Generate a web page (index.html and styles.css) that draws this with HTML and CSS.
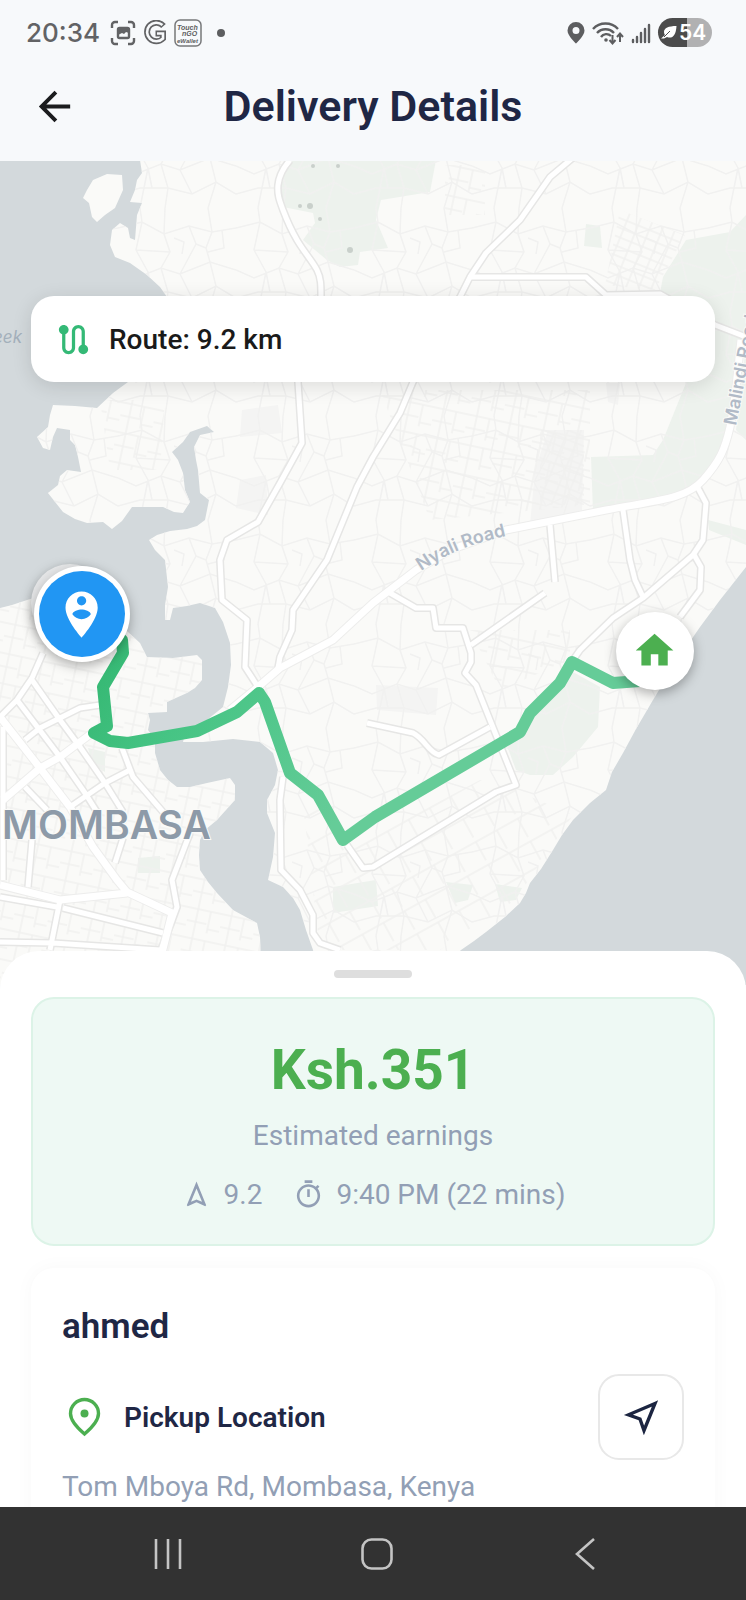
FILE: index.html
```html
<!DOCTYPE html>
<html lang="en">

<head>
    <meta charset="UTF-8">
    <meta name="viewport" content="width=device-width, initial-scale=1.0">
    <title>Delivery Details</title>
    <link rel="stylesheet" href="styles.css">
</head>

<body>
    <div class="status-bar">
        <div class="status-left">
            <span class="clock">20:34</span>
            <svg width="26" height="26" viewBox="0 0 26 26" fill="none" stroke="#626365" stroke-width="2.4">
                <path d="M2 8V5a3 3 0 0 1 3-3h3M18 2h3a3 3 0 0 1 3 3v3M24 18v3a3 3 0 0 1-3 3h-3M8 24H5a3 3 0 0 1-3-3v-3" />
                <rect x="8" y="8" width="11" height="10" rx="1.5" />
                <path d="M8 15V8h11v5l-3-1-2 2-2-1z" fill="#626365" stroke="none" />
            </svg>
            <svg width="24" height="26" viewBox="0 0 24 26" fill="none">
                <path d="M20.5 6A9.3 9.3 0 1 0 20 18.500V13.500H12.500" stroke="#626365" stroke-width="6" />
                <path d="M19.500 5A9.3 9.3 0 1 0 20 18.500V13.500H14" stroke="#f7f9fb" stroke-width="2.600" />
            </svg>
            <svg width="28" height="28" viewBox="0 0 28 28">
                <rect x="1" y="1" width="26" height="26" rx="5" fill="none" stroke="#77787a" stroke-width="1.5" />
                <g class="wallet-text">
                    <text x="3" y="11" class="wallet-big">Touch</text>
                    <text x="8" y="17" class="wallet-big">nGO</text>
                    <text x="3" y="24">eWallet</text>
                </g>
            </svg>
            <span class="status-dot"></span>
        </div>
        <div class="status-right">
            <svg width="18" height="22" viewBox="0 0 18 22">
                <path fill="#5d5e60" fill-rule="evenodd" d="M9 0a8.500 8.500 0 0 0-8.500 8.500C.5 14 9 21.500 9 21.500s8.500-7.500 8.500-13A8.500 8.500 0 0 0 9 0zm0 5a3.500 3.500 0 1 1 0 7 3.500 3.500 0 0 1 0-7z" />
            </svg>
            <svg width="32" height="26" viewBox="0 0 32 26" fill="none" stroke="#5d5e60" stroke-width="2.4">
                <path d="M1 9a17 17 0 0 1 25 0M5 13a11.500 11.500 0 0 1 17 0M9 17a6.500 6.500 0 0 1 10-1" />
                <circle cx="14" cy="20" r="1.800" fill="#5d5e60" stroke="none" />
                <path d="M20.500 15v8M17.500 20l3 3.500 3-3.500M28 22v-8M25 17l3-3.500 3 3.500" stroke-width="2" />
            </svg>
            <svg width="20" height="22" viewBox="0 0 20 22" stroke="#5d5e60" stroke-width="2.4" stroke-linecap="round">
                <path d="M2 18v2M6 15v5M10 11v9M14 7v13M18 3v17" />
            </svg>
            <div class="battery">
                <svg width="16" height="14" viewBox="0 0 16 14">
                    <path fill="#fff" d="M15.500 0c-8 0-12.500 2-12.500 6 0 2 1 3 1 3L0 12.500h3L6 11c5 2 9-1 9.500-11z" />
                    <path d="M3 11l6-6" stroke="#4c4c4c" />
                </svg>
                <span>54</span>
            </div>
        </div>
    </div>

    <header class="app-bar">
        <button class="back-button" aria-label="Back">
            <svg width="47" height="47" viewBox="0 0 24 24" fill="#1b1c1e">
                <path d="M20 11H7.83l5.59-5.59L12 4l-8 8 8 8 1.410-1.410L7.830 13H20v-2z" />
            </svg>
        </button>
        <h1>Delivery Details</h1>
    </header>

    <main class="map-area">
        <svg class="map" viewBox="0 161 746 824" preserveAspectRatio="xMidYMin slice">
            <defs>
                <path id="mainland" d="M140 160L142 173 137 180 135 190 130 202 142 203 137 215 135 240 130 238 128 228 120 223 112 230 110 245 115 257 130 263 147 275 160 287 167 297 165 340 128 382 113 393 97 408 75 406 53 405 50 415 48 427 37 437 43 448 50 450 53 437 57 428 70 430 70 440 75 445 78 457 81 472 67 470 60 476 58 485 48 493 63 512 75 519 87 523 103 522 112 529 122 521 132 507 163 507 174 512 183 513 190 502 185 490 183 473 178 460 172 452 183 442 190 432 207 426 214 432 200 435 194 447 196 460 198 470 200 493 209 500 207 510 205 520 197 526 187 529 170 531 157 535 149 540 155 550 165 560 168 587 165 605 165 620 170 620 173 608 187 606 200 603 215 608 223 622 230 643 231 665 228 687 223 707 207 720 185 733 183 742 203 742 233 739 260 742 273 753 278 770 275 785 267 800 267 813 275 833 273 857 268 880 283 887 293 898 300 910 306 930 313 950 320 990H420L461 950 474 941 486 932 505 917 520 903 526 893 530 883 541 869 553 850 562 835 573 820 590 803 606 790 612 772 623 753 636 729 653 700 676 662 700 627 720 600 746 567V160z" />
                <path id="old-town" d="M0 608L12 605 27 600 60 590 128 632 140 643 147 657 173 658 197 655 202 660 202 680 195 688 187 693 167 702 167 712 148 713 150 720 148 730 155 740 155 753 160 770 168 780 177 787 190 787 207 783 230 778 235 785 235 800 217 820 205 830 200 840 199 855 200 870 208 882 217 893 233 910 257 923 260 937 262 990H0z" />
                <path id="islet" d="M83 198L87 190 93 180 107 174 122 175 123 190 115 208 105 215 97 222 92 217 89 203z" />

                <!-- side streets, tiled over the land -->
                <pattern id="streets" width="118" height="104" patternUnits="userSpaceOnUse">
                    <path d="M0 20L24 14 46 26 71 18 94 24 118 20M0 62L18 70 43 60 62 66 92 54 118 62M24 14L18 42 30 64 22 104M22 0L24 14M46 26L52 44 43 60 50 84 47 104M47 0L46 26M71 18L78 36 62 66M94 24L88 40 92 54 98 78 90 104M90 0L94 24M0 90L22 84 50 84 74 90 98 78 118 90M18 42L52 44M78 36L88 40M62 66L74 90M30 64L34 84M104 22L106 40 90 44M56 30L66 34 64 46" />
                </pattern>
                <pattern id="blocks" width="34" height="30" patternUnits="userSpaceOnUse" patternTransform="rotate(12)">
                    <path d="M0 8H34M0 21H20M9 0V30M22 8V30M22 26H34" />
                </pattern>
                <pattern id="grid" width="24" height="26" patternUnits="userSpaceOnUse" patternTransform="rotate(-29)">
                    <path d="M0 5H24M8 5V26" />
                </pattern>
                <pattern id="estate" width="12" height="36" patternUnits="userSpaceOnUse" patternTransform="rotate(22)">
                    <path d="M0 6H12M0 15H12M0 24H12M0 33H12M4 0V36" />
                </pattern>

                <linearGradient id="route-fade" gradientUnits="userSpaceOnUse" x1="110" y1="640" x2="350" y2="800">
                    <stop offset="0" stop-color="#35b873" />
                    <stop offset="0.35" stop-color="#46c484" />
                    <stop offset="1" stop-color="#65cc98" />
                </linearGradient>

                <g id="major">
                    <path d="M290 160C283 168 279 175 278 185S280 202 283 210 290 228 297 240 313 262 317 270 321 285 321 297L298 382 302 443 280 483 258 522 227 540 220 560 222 600 247 620 245 667 258 687" />
                    <path d="M575 156L550 177 520 220 486 253 470 277 460 297 413 382 400 413 373 457 357 487 327 560 293 610 292 630 280 657 278 668" />
                    <path d="M470 277L516 277 586 277 606 295 660 294 715 325 746 337" />
                    <path d="M698 488L706 503 703 540 693 555 643 598 613 618 580 650 573 660" />
                    <path d="M693 553L701 567 700 590 680 617M550 525L555 582M623 510L630 560 635 580 643 597" />
                    <path d="M390 593L416 608 433 608 436 628 463 628 471 653 471 662 465 673 476 685 516 785 496 792 373 867 363 868 347 845M471 645L545 593" />
                    <path d="M367 723L413 733C425 739 428 752 439 755L490 727" />
                    <path d="M283 777L280 800 281 870 300 890 313 915 313 933 320 943 340 950" />
                </g>
                <g id="old-town-roads">
                    <path d="M0 717L17 700 32 678 43 653M17 700L60 757 85 793 97 812M32 680L60 720 80 747 105 783 123 812M25 787L47 810M25 740L40 728 80 708 100 705M70 807L105 783 130 770M122 748L133 777 163 812M123 838L115 863M3 727V880M32 840L28 887M63 908L163 933M60 900L50 950M0 942L53 943 160 950M190 833L172 880 177 907 160 953M0 897L57 907" />
                </g>
                <path id="avenue" d="M0 717L40 768 70 807 93 847 117 880 127 892 172 913 162 953M3 800L40 768 60 757 92 733M0 885L60 900 127 893" />
                <path id="highway" d="M741 340C737 375 735 405 730 427S720 461 703 480 660 500 606 510L506 530 450 550 416 570 373 603 333 640 280 668 258 687 230 710" />
                <path id="nyali-path" d="M421 571C446 554 470 543 520 533" />
            </defs>

            <rect y="160" width="746" height="825" fill="#d3d9dc" />
            <g class="land">
                <use href="#mainland" />
                <use href="#old-town" />
                <use href="#islet" />
            </g>

            <g class="parks">
                <path d="M290 160L280 185 283 207 313 213 315 223 303 240 327 260 340 267 358 265 360 252 388 248 376 220 381 200 430 192 436 160z" />
                <path d="M746 215L730 232 686 240 663 277 660 293 686 383 663 440 653 455 591 457 593 512 673 497 703 480 723 450 730 427 741 340 746 330z" />
                <path d="M746 345L736 430 746 440zM708 520L746 530V545L709 530zM586 224L600 226 602 248 584 246z" />
                <path d="M573 672L600 687 598 727 573 757 553 775 530 775 516 770 506 743 523 733 533 713z" />
                <path d="M333 887L376 880 378 906 333 913zM446 882L473 885 468 900 455 903zM495 884L522 888 516 900 500 902zM138 858L160 856 160 873 138 873zM88 748L105 752 105 772 92 764z" />
            </g>
            <g class="built-up">
                <path d="M242 410L278 405 282 433 240 437zM240 480L266 475 268 515 236 508zM376 685L438 688 436 715 377 710zM548 430L584 430 582 510 530 525 535 470zM606 383L620 383 618 405 608 402z" />
            </g>

            <use href="#mainland" fill="url(#streets)" />
            <path fill="url(#blocks)" d="M100 400L165 400 160 470 110 470zM445 165H485V215H445zM380 390L590 390 590 505 430 520zM470 630H570V660L500 690z" />
            <path fill="url(#estate)" d="M620 210L685 235 655 290 605 285zM540 430H584V505H540z" />
            <path fill="url(#grid)" d="M300 780L347 850 480 780 515 790 573 815 515 900 440 950H320z" />
            <use href="#old-town" fill="url(#blocks)" />

            <g class="road-casing">
                <use href="#major" />
                <use href="#old-town-roads" />
            </g>
            <use href="#avenue" class="road-casing wide" />
            <use href="#highway" class="road-casing wide" />
            <g class="road-fill">
                <use href="#major" />
                <use href="#old-town-roads" />
            </g>
            <use href="#avenue" class="road-fill wide" />
            <use href="#highway" class="road-fill wide" />

            <g fill="#c9d0cb">
                <circle cx="300" cy="206" r="2" />
                <circle cx="310" cy="206" r="3" />
                <circle cx="320" cy="219" r="2" />
                <circle cx="350" cy="250" r="3" />
                <circle cx="313" cy="166" r="2" />
                <circle cx="338" cy="166" r="2" />
            </g>

            <g class="map-label">
                <text x="2" y="839" class="city">MOMBASA</text>
                <text class="road-name"><textPath href="#nyali-path">Nyali Road</textPath></text>
                <text class="road-name" transform="translate(736 426) rotate(-79)">Malindi Road</text>
                <text x="22" y="343" class="creek" text-anchor="end">eek</text>
            </g>

            <path class="route-line" d="M122 640L123 653 103 687 107 726 94 733 110 741 128 743 197 731 237 712 259 693 265 702 290 773 318 795 343 840 375 817 520 732 530 713 560 683 572 662 613 683 640 681" />

            <g class="marker">
                <circle cx="70" cy="603" r="39" fill="#e6e7e8" />
            </g>
            <g class="marker">
                <circle cx="82" cy="614" r="48" fill="#fff" />
                <circle cx="82" cy="614" r="43" fill="#2196f3" />
            </g>
            <path transform="translate(54 587) scale(2.3)" fill="#fff" d="M12 2C8.140 2 5 5.140 5 9c0 5.250 7 13 7 13s7-7.750 7-13c0-3.860-3.140-7-7-7zm0 2c1.100 0 2 .9 2 2 0 1.110-.9 2-2 2s-2-.89-2-2c0-1.100.9-2 2-2zm0 10c-1.670 0-3.140-.85-4-2.150.02-1.320 2.670-2.050 4-2.050s3.980.73 4 2.050c-.86 1.300-2.330 2.150-4 2.150z" />
            <g class="marker">
                <circle cx="655" cy="651" r="39" fill="#fff" />
            </g>
            <path transform="translate(632 628) scale(1.88)" fill="#4caf50" d="M10 20v-6h4v6h5v-8h3L12 3 2 12h3v8z" />
        </svg>

        <div class="route-card">
            <svg width="39" height="39" viewBox="0 0 24 24" fill="#34b976">
                <path d="M19 15.180V7c0-2.210-1.790-4-4-4s-4 1.790-4 4v10c0 1.100-.9 2-2 2s-2-.9-2-2V8.820C8.160 8.400 9 7.300 9 6c0-1.660-1.340-3-3-3S3 4.340 3 6c0 1.300.84 2.400 2 2.820V17c0 2.210 1.790 4 4 4s4-1.790 4-4V7c0-1.100.9-2 2-2s2 .9 2 2v8.180c-1.160.41-2 1.510-2 2.820 0 1.660 1.340 3 3 3s3-1.340 3-3c0-1.300-.84-2.400-2-2.820z" />
            </svg>
            <span>Route: 9.2 km</span>
        </div>
    </main>

    <section class="sheet">
        <div class="sheet-handle"></div>

        <div class="earnings-card">
            <div class="amount">Ksh.351</div>
            <div class="caption">Estimated earnings</div>
            <div class="trip-info">
                <span class="trip-item">
                    <svg width="31" height="31" viewBox="0 0 24 24" fill="#929fb5">
                        <path d="M12 7.270l4.280 10.430-3.470-1.530-.81-.36-.81.36-3.470 1.530L12 7.270M12 2L4.500 20.290l.71.71L12 18l6.790 3 .71-.71L12 2z" />
                    </svg>
                    9.2
                </span>
                <span class="trip-item">
                    <svg width="31" height="31" viewBox="0 0 24 24" fill="#929fb5">
                        <path d="M15 1H9v2h6V1zm-4 13h2V8h-2v6zm8.030-6.610l1.420-1.420c-.43-.51-.9-.99-1.410-1.410l-1.420 1.420C16.070 4.740 14.120 4 12 4c-4.970 0-9 4.030-9 9s4.020 9 9 9 9-4.030 9-9c0-2.120-.74-4.070-1.970-5.610zM12 20c-3.870 0-7-3.130-7-7s3.130-7 7-7 7 3.130 7 7-3.130 7-7 7z" />
                    </svg>
                    9:40 PM (22 mins)
                </span>
            </div>
        </div>

        <div class="details-card">
            <h2>ahmed</h2>
            <div class="location-row">
                <svg width="45" height="40" viewBox="0 0 45 40">
                    <path d="M22.500 37C12.500 28.500 8.500 22.500 8.500 16.500a14 14 0 0 1 28 0C36.500 22.500 32.500 28.500 22.500 37z" fill="none" stroke="#4caf50" stroke-width="3.4" />
                    <circle cx="22.500" cy="16.500" r="4" fill="#4caf50" />
                </svg>
                <h3>Pickup Location</h3>
                <button class="navigate-button" aria-label="Navigate">
                    <svg width="36" height="36" viewBox="0 0 36 36" fill="none" stroke="#1c2541" stroke-width="3.4">
                        <path d="M32 4.500L5.500 15.800 17 20 21 31.500z" />
                    </svg>
                </button>
            </div>
            <p class="address">Tom Mboya Rd, Mombasa, Kenya</p>
        </div>
    </section>

    <nav class="nav-bar">
        <button aria-label="Recent apps">
            <svg width="36" height="36" viewBox="0 0 36 36" fill="none" stroke="#c4c4c4" stroke-width="2.6">
                <path d="M6 3v30M18 3v30M30 3v30" />
            </svg>
        </button>
        <button aria-label="Home">
            <svg width="36" height="36" viewBox="0 0 36 36" fill="none" stroke="#c4c4c4" stroke-width="2.6">
                <rect x="3.500" y="3.500" width="29" height="29" rx="9" />
            </svg>
        </button>
        <button aria-label="Back">
            <svg width="36" height="36" viewBox="0 0 36 36" fill="none" stroke="#c4c4c4" stroke-width="2.6">
                <path d="M27 3L10 18l17 15" />
            </svg>
        </button>
    </nav>
</body>

</html>
```

FILE: styles.css
```css
* {
    box-sizing: border-box;
}

body {
    font-family: Roboto, Arial, sans-serif;
    margin: 0;
    height: 100vh;
    display: flex;
    flex-direction: column;
    overflow: hidden;
    background-color: #f7f9fb;
    color: #1f2745;
}

h1,
h2,
h3,
p {
    margin: 0;
}

button {
    padding: 0;
    border: none;
    background: none;
}

svg {
    display: block;
    flex-shrink: 0;
}

/* Status bar */
.status-bar {
    flex-shrink: 0;
    height: 65px;
    padding: 0 34px 0 26px;
    display: flex;
    align-items: center;
    justify-content: space-between;
}

.status-left,
.status-right {
    display: flex;
    align-items: center;
    gap: 7px;
}

.clock {
    font-family: Inter, sans-serif;
    font-size: 26px;
    font-weight: 500;
    color: #626365;
    margin-right: 3px;
}

.wallet-text {
    font-family: "Liberation Sans", sans-serif;
    font-size: 6px;
    font-weight: bold;
    font-style: italic;
    fill: #5d5e60;
}

.wallet-big {
    font-size: 7px;
}

.status-dot {
    width: 8px;
    height: 8px;
    margin-left: 8px;
    border-radius: 50%;
    background-color: #5d5e60;
}

.battery {
    width: 54px;
    height: 29px;
    padding-left: 3px;
    display: flex;
    align-items: center;
    gap: 2px;
    border-radius: 15px;
    background: linear-gradient(to right, #4c4c4c 54%, #b1b1b2 54%);
    color: #fff;
    font-family: Inter, sans-serif;
    font-size: 21px;
    font-weight: 600;
}

/* App bar */
.app-bar {
    flex-shrink: 0;
    height: 96px;
    padding: 0 31px 14px;
    display: grid;
    grid-template-columns: 1fr auto 1fr;
    align-items: center;
}

.app-bar h1 {
    font-size: 43px;
    font-weight: 600;
    line-height: 50px;
}

.back-button {
    justify-self: start;
}

/* Map */
.map-area {
    flex-shrink: 0;
    position: relative;
}

.map {
    width: 100%;
    height: auto;
}

.land {
    fill: #fafaf8;
}

.parks {
    fill: #edf2ed;
}

.built-up {
    fill: #f4f4f3;
}

pattern path {
    fill: none;
    stroke: #f1f1f0;
    stroke-width: 1.5;
}

.road-casing,
.road-fill {
    fill: none;
    stroke: #e6e6e5;
    stroke-width: 8;
    stroke-linejoin: round;
}

.road-casing.wide {
    stroke: #ededec;
    stroke-width: 9;
}

.road-fill {
    stroke: #fff;
    stroke-width: 5;
}

.road-fill.wide {
    stroke-width: 7;
}

.map-label {
    fill: #b1bac7;
    stroke: #fafaf8;
    stroke-width: 2px;
    paint-order: stroke;
    font-family: Inter, sans-serif;
}

.city {
    fill: #8d9aa8;
    font-size: 39px;
    font-weight: 600;
}

.road-name {
    font-size: 18px;
    font-weight: 600;
}

.creek {
    fill: #a3b0bb;
    stroke: #d3d9dc;
    font-size: 17px;
    font-style: italic;
}

.route-line {
    fill: none;
    stroke: url(#route-fade);
    stroke-width: 12;
    stroke-linecap: round;
    stroke-linejoin: round;
}

.marker {
    filter: drop-shadow(0 4px 6px rgba(0, 0, 0, 0.3));
}

.route-card {
    position: absolute;
    top: 135px;
    left: 31px;
    right: 31px;
    height: 86px;
    padding: 0 23px;
    display: flex;
    align-items: center;
    gap: 16px;
    border-radius: 23px;
    background-color: #fff;
    box-shadow: 0 4px 20px rgba(0, 0, 0, 0.12);
    color: #1a1a1a;
    font-size: 28px;
    font-weight: 500;
}

/* Bottom sheet */
.sheet {
    flex: 1;
    min-height: 0;
    overflow: hidden;
    position: relative;
    margin-top: -34px;
    padding: 19px 31px 0;
    border-radius: 39px 39px 0 0;
    background-color: #fff;
}

.sheet-handle {
    width: 78px;
    height: 8px;
    margin: 0 auto 19px;
    border-radius: 4px;
    background-color: #dedede;
}

.earnings-card {
    padding: 39px 31px 33px;
    margin-bottom: 22px;
    border: 2px solid #dcf3e7;
    border-radius: 23px;
    background-color: #eef9f4;
    text-align: center;
}

.amount {
    color: #4caf50;
    font-size: 55px;
    font-weight: 700;
    line-height: 64px;
}

.caption,
.trip-info,
.address {
    color: #929fb5;
    font-size: 28px;
    line-height: 33px;
}

.caption {
    margin-top: 17px;
}

.trip-info {
    margin-top: 26px;
    display: flex;
    justify-content: center;
    gap: 31px;
}

.trip-item {
    display: flex;
    align-items: center;
    gap: 12px;
}

.details-card {
    padding: 38px 31px;
    border-radius: 23px;
    background-color: #fff;
    box-shadow: 0 0 20px rgba(0, 0, 0, 0.03);
}

.details-card h2 {
    font-size: 35px;
    font-weight: 600;
    line-height: 41px;
}

.location-row {
    margin: 27px 0 10px;
    display: flex;
    align-items: center;
    gap: 17px;
}

.location-row h3 {
    flex: 1;
    font-size: 28px;
    font-weight: 600;
}

.navigate-button {
    width: 86px;
    height: 86px;
    display: flex;
    align-items: center;
    justify-content: center;
    border: 2px solid #e8e8e8;
    border-radius: 21px;
}

/* System navigation */
.nav-bar {
    flex-shrink: 0;
    position: relative;
    height: 93px;
    padding: 0 17% 0 18%;
    display: flex;
    align-items: center;
    justify-content: space-between;
    background-color: #323232;
}

.nav-bar button {
    padding: 16px;
}
```
